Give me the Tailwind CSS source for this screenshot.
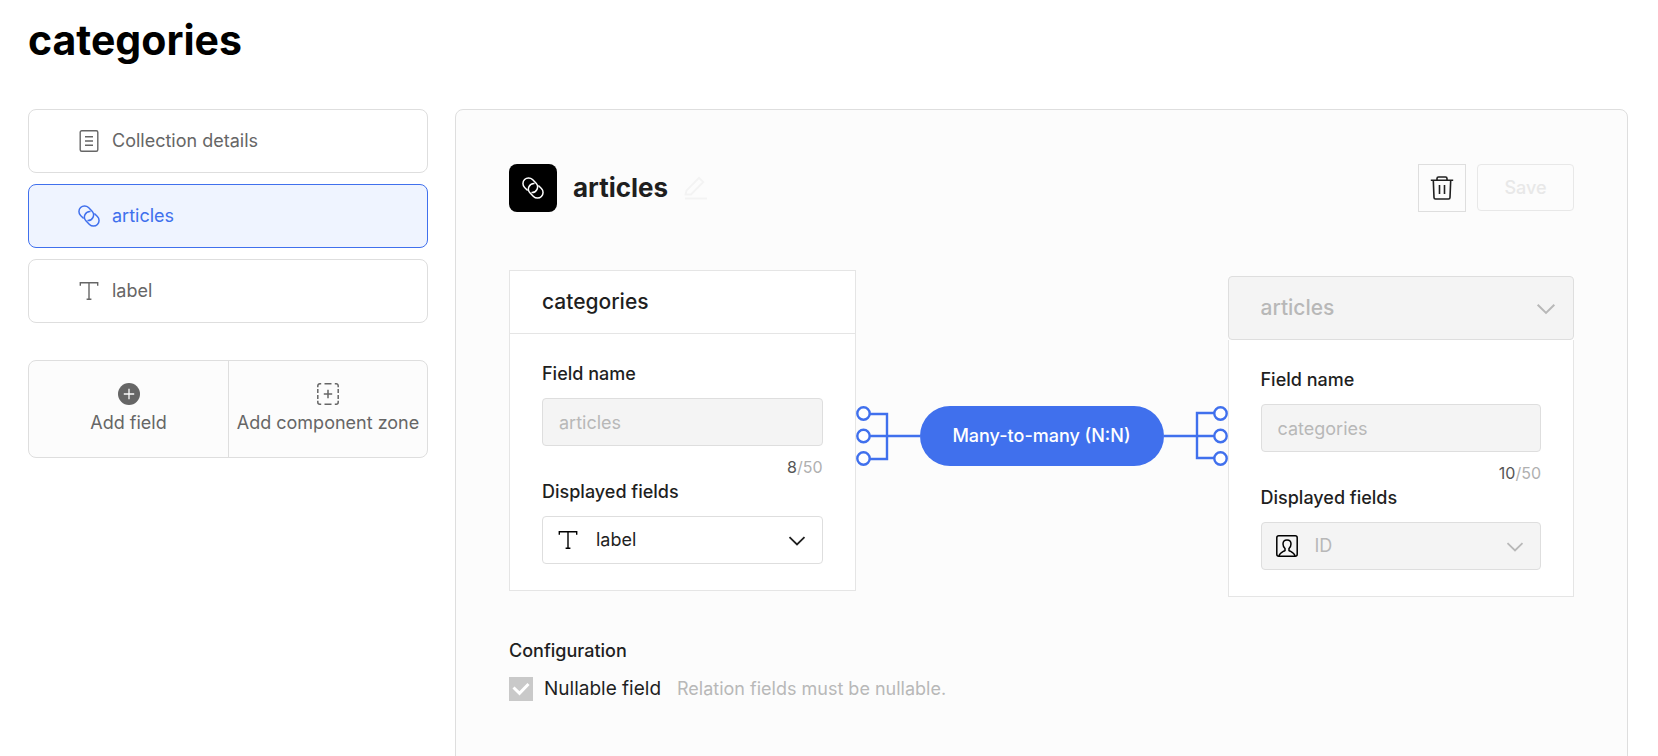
<!DOCTYPE html>
<html lang="en">
<head>
  <meta charset="UTF-8" />
  <meta name="viewport" content="width=device-width, initial-scale=1.0"/>
  <title>categories</title>
  <!-- Tailwind CSS -->
  <script src="https://cdn.jsdelivr.net/npm/@tailwindcss/browser@4"></script>
</head>
<body class="bg-white text-[#1f1f1f] text-lg font-['Inter',sans-serif]">
  <!-- Shared icons -->
  <svg class="hidden">
    <symbol id="icon-relation" viewBox="0 0 22 22">
      <g fill="none" stroke="currentColor" stroke-width="1.5" transform="rotate(45 11 11)">
        <path d="M13.1 15.3A5.6 5.6 0 0 0 9.5 5.4H4.7A5.6 5.6 0 0 0 4.7 16.6H9"/>
        <path d="M8.9 6.7A5.6 5.6 0 0 0 12.5 16.6H17.3A5.6 5.6 0 0 0 17.3 5.4H13"/>
      </g>
    </symbol>
    <symbol id="icon-text" viewBox="0 0 22 22">
      <path d="M2.3 5.8V2.7H19.7V5.8M11 2.7V19.3M8.6 19.3H13.4" fill="none" stroke="currentColor" stroke-width="1.4"/>
    </symbol>
    <symbol id="icon-chevron" viewBox="0 0 18 18">
      <path d="M1.5 5.2L9 12.5L16.5 5.2" fill="none" stroke="currentColor" stroke-width="1.8"/>
    </symbol>
    <symbol id="icon-many" viewBox="0 0 64 60">
      <path d="M14 8H31V53H14M14 30H64" fill="none" stroke="currentColor" stroke-width="2.4"/>
      <g fill="white" stroke="currentColor" stroke-width="2.4">
        <circle cx="7.5" cy="7.5" r="6.2"/>
        <circle cx="7.5" cy="30" r="6.2"/>
        <circle cx="7.5" cy="52.5" r="6.2"/>
      </g>
    </symbol>
  </svg>

  <header class="px-7 pt-4">
    <h1 class="text-[41px] leading-12 font-bold text-black">categories</h1>
  </header>

  <div class="flex items-start gap-[27px] pl-7 pr-[30px] mt-[45px]">
    <!-- Field list -->
    <aside class="w-[400px] shrink-0">
      <nav class="flex flex-col gap-[11px]">
        <a href="#" class="flex items-center gap-3 h-16 pl-[49px] border border-[#dedede] rounded-lg text-[#666]">
          <svg class="size-[22px]" viewBox="0 0 22 22" fill="none" stroke="currentColor" stroke-width="1.4">
            <rect x="2.2" y="0.8" width="17.6" height="20.4" rx="1.5"/>
            <path d="M7 6.7H15M7 11H15M7 15.3H15"/>
          </svg>
          Collection details
        </a>
        <a href="#" class="flex items-center gap-3 h-16 pl-[49px] border border-[#4070ed] rounded-lg bg-[#eff4ff] text-[#4070ed]">
          <svg class="size-[22px]"><use href="#icon-relation"/></svg>
          articles
        </a>
        <a href="#" class="flex items-center gap-3 h-16 pl-[49px] border border-[#dedede] rounded-lg text-[#666]">
          <svg class="size-[22px]"><use href="#icon-text"/></svg>
          label
        </a>
      </nav>

      <div class="grid grid-cols-2 mt-[37px] h-[98px] border border-[#dedede] rounded-lg bg-[#fcfcfc] text-[#666]">
        <button type="button" class="flex flex-col items-center justify-center whitespace-nowrap">
          <svg class="size-[22px] mb-[6px]" viewBox="0 0 22 22">
            <circle cx="11" cy="11" r="11" fill="currentColor"/>
            <path d="M11 5.8V16.2M5.8 11H16.2" stroke="#fcfcfc" stroke-width="1.3"/>
          </svg>
          <span class="leading-6">Add field</span>
        </button>
        <button type="button" class="flex flex-col items-center justify-center border-l border-[#dedede] whitespace-nowrap">
          <svg class="size-[22px] mb-[6px]" viewBox="0 0 22 22" fill="none" stroke="currentColor" stroke-width="1.5">
            <path d="M0.8 4.2V2.8A2 2 0 0 1 2.8 0.8H4.2M17.8 0.8H19.2A2 2 0 0 1 21.2 2.8V4.2M21.2 17.8V19.2A2 2 0 0 1 19.2 21.2H17.8M4.2 21.2H2.8A2 2 0 0 1 0.8 19.2V17.8"/>
            <path d="M7.5 0.8H14.5M7.5 21.2H14.5M0.8 6V10M0.8 12V16M21.2 6V10M21.2 12V16"/>
            <path d="M11 6.8V15.2M6.8 11H15.2"/>
          </svg>
          <span class="leading-6">Add component zone</span>
        </button>
      </div>
    </aside>

    <!-- Field editor -->
    <main class="flex-1 px-[53px] pt-[54px] pb-24 border border-[#dedede] rounded-lg bg-[#fcfcfc]">
      <div class="flex items-start justify-between">
        <div class="flex items-center gap-4">
          <div class="flex items-center justify-center size-12 rounded-lg bg-black text-white">
            <svg class="size-[22px]"><use href="#icon-relation"/></svg>
          </div>
          <h2 class="text-[26px] leading-8 font-bold">articles</h2>
          <button type="button" aria-label="Rename field" disabled class="text-[#f3f3f3]">
            <svg class="size-6" viewBox="0 0 24 24" fill="none" stroke="currentColor" stroke-width="1.8">
              <path d="M1.5 18.5L2.5 14.5L15 1.8L19.3 6L7 18.5Z"/>
              <path d="M1 22.5H23"/>
            </svg>
          </button>
        </div>
        <div class="flex items-start gap-[11px]">
          <button type="button" aria-label="Delete field" class="flex items-center justify-center size-12 border border-[#dedede]">
            <svg class="size-6" viewBox="0 0 24 24" fill="none" stroke="currentColor" stroke-width="1.6">
              <path d="M0.8 4.3H23.2M7 4.3V2.5A1.5 1.5 0 0 1 8.5 1H15.5A1.5 1.5 0 0 1 17 2.5V4.3"/>
              <path d="M3.3 4.3L4 21.5A1.5 1.5 0 0 0 5.5 23H18.5A1.5 1.5 0 0 0 20 21.5L20.7 4.3M9.5 9V18M14.5 9V18"/>
            </svg>
          </button>
          <button type="button" disabled class="h-[47px] w-[97px] border border-[#e8e8e8] rounded-sm font-medium text-[#e8e8e8]">Save</button>
        </div>
      </div>

      <div class="grid grid-cols-[1fr_372px_1fr] items-start mt-[58px]">
        <section class="border border-[#e5e5e5] bg-white">
          <h3 class="h-[63px] px-8 border-b border-[#e5e5e5] text-[21px] leading-[62px] font-medium">categories</h3>
          <div class="px-8 pt-7 pb-[26px]">
            <label for="sourceName" class="block leading-6 font-medium">Field name</label>
            <input id="sourceName" type="text" value="articles" disabled class="block mt-3 h-12 w-full px-4 border border-[#dedede] rounded-sm bg-[#f4f4f4] text-[#b8b8b8]">
            <p class="mt-[11px] text-right text-base leading-5 text-[#b0b0b0]"><span class="text-[#555]">8</span>/50</p>
            <label for="sourceDisplay" class="block mt-[3px] leading-6 font-medium">Displayed fields</label>
            <div class="relative mt-3">
              <select id="sourceDisplay" class="block appearance-none h-12 w-full pl-[53px] pr-12 border border-[#dedede] rounded-sm bg-white">
                <option>label</option>
              </select>
              <svg class="absolute left-[15px] top-[13px] size-[22px] pointer-events-none text-black"><use href="#icon-text"/></svg>
              <svg class="absolute right-[17px] top-4 size-[18px] pointer-events-none"><use href="#icon-chevron"/></svg>
            </div>
          </div>
        </section>

        <!-- Relation type -->
        <div class="flex mt-34 text-[#4070ed]">
          <svg class="h-[60px] w-16 shrink-0"><use href="#icon-many"/></svg>
          <button type="button" class="flex-1 h-[60px] rounded-full bg-[#4070ed] text-white font-medium">Many-to-many (N:N)</button>
          <svg class="h-[60px] w-16 shrink-0 rotate-180"><use href="#icon-many"/></svg>
        </div>

        <section class="mt-[6px] bg-white">
          <div class="relative">
            <select aria-label="Target collection" disabled class="block appearance-none h-16 w-full px-8 border border-[#dedede] rounded-sm bg-[#f4f4f4] text-[21px] font-medium text-[#b8b8b8]">
              <option>articles</option>
            </select>
            <svg class="absolute right-[18px] top-[23px] size-5 pointer-events-none text-[#b8b8b8]"><use href="#icon-chevron"/></svg>
          </div>
          <div class="px-8 pt-7 pb-[26px] border-x border-b border-[#e5e5e5]">
            <label for="targetName" class="block leading-6 font-medium">Field name</label>
            <input id="targetName" type="text" value="categories" disabled class="block mt-3 h-12 w-full px-4 border border-[#dedede] rounded-sm bg-[#f4f4f4] text-[#b8b8b8]">
            <p class="mt-[11px] text-right text-base leading-5 text-[#b0b0b0]"><span class="text-[#555]">10</span>/50</p>
            <label for="targetDisplay" class="block mt-[3px] leading-6 font-medium">Displayed fields</label>
            <div class="relative mt-3">
              <select id="targetDisplay" disabled class="block appearance-none h-12 w-full pl-[53px] pr-12 border border-[#dedede] rounded-sm bg-[#f4f4f4] text-[#b8b8b8]">
                <option>ID</option>
              </select>
              <svg class="absolute left-[15px] top-[13px] size-[22px] pointer-events-none text-black" viewBox="0 0 22 22" fill="none" stroke="currentColor" stroke-width="1.5">
                <rect x="0.8" y="0.8" width="20.4" height="20.4" rx="2"/>
                <path d="M3 21C3.5 18 5.5 17.5 9 15.5V13.5C7.5 12 7 10.5 7 9C7 6.5 8.5 5 11 5C13.5 5 15 6.5 15 9C15 10.5 14.5 12 13 13.5V15.5C16.5 17.5 18.5 18 19 21"/>
              </svg>
              <svg class="absolute right-[17px] top-4 size-[18px] pointer-events-none text-[#b8b8b8]"><use href="#icon-chevron"/></svg>
            </div>
          </div>
        </section>
      </div>

      <h3 class="mt-[42px] leading-6 font-medium">Configuration</h3>
      <div class="flex items-center mt-3">
        <div class="relative size-6">
          <input id="nullable" type="checkbox" checked disabled class="block appearance-none size-6 bg-[#c9c9c9]">
          <svg class="absolute inset-0 size-6 pointer-events-none" viewBox="0 0 24 24" fill="none" stroke="white" stroke-width="3">
            <path d="M4.5 10.5L10.5 16.3L19.5 7"/>
          </svg>
        </div>
        <label for="nullable" class="ml-[11px] text-[19px] leading-7">Nullable field</label>
        <span class="ml-4 text-[#b8b8b8]">Relation fields must be nullable.</span>
      </div>
    </main>
  </div>
</body>
</html>
